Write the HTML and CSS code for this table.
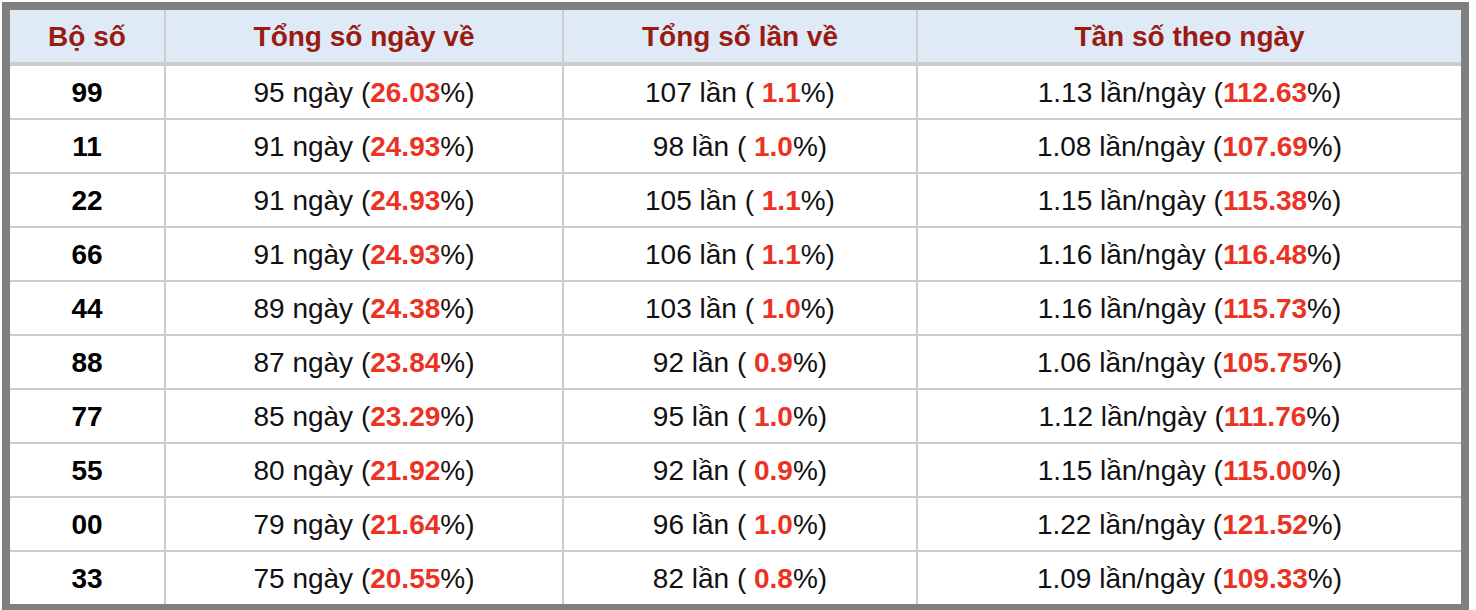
FILE: index.html
```html
<!DOCTYPE html>
<html lang="vi">
<head>
<meta charset="utf-8">
<title>Thống kê</title>
<link rel="stylesheet" href="styles.css">
</head>
<body>
<div class="frame">
<table class="stats">
<colgroup>
<col class="c1"><col class="c2"><col class="c3"><col class="c4">
</colgroup>
<thead>
<tr><th>Bộ số</th><th>Tổng số ngày về</th><th>Tổng số lần về</th><th>Tần số theo ngày</th></tr>
</thead>
<tbody>
<tr><td class="num">99</td><td>95 ngày (<b>26.03</b>%)</td><td>107 lần ( <b>1.1</b>%)</td><td>1.13 lần/ngày (<b>112.63</b>%)</td></tr>
<tr><td class="num">11</td><td>91 ngày (<b>24.93</b>%)</td><td>98 lần ( <b>1.0</b>%)</td><td>1.08 lần/ngày (<b>107.69</b>%)</td></tr>
<tr><td class="num">22</td><td>91 ngày (<b>24.93</b>%)</td><td>105 lần ( <b>1.1</b>%)</td><td>1.15 lần/ngày (<b>115.38</b>%)</td></tr>
<tr><td class="num">66</td><td>91 ngày (<b>24.93</b>%)</td><td>106 lần ( <b>1.1</b>%)</td><td>1.16 lần/ngày (<b>116.48</b>%)</td></tr>
<tr><td class="num">44</td><td>89 ngày (<b>24.38</b>%)</td><td>103 lần ( <b>1.0</b>%)</td><td>1.16 lần/ngày (<b>115.73</b>%)</td></tr>
<tr><td class="num">88</td><td>87 ngày (<b>23.84</b>%)</td><td>92 lần ( <b>0.9</b>%)</td><td>1.06 lần/ngày (<b>105.75</b>%)</td></tr>
<tr><td class="num">77</td><td>85 ngày (<b>23.29</b>%)</td><td>95 lần ( <b>1.0</b>%)</td><td>1.12 lần/ngày (<b>111.76</b>%)</td></tr>
<tr><td class="num">55</td><td>80 ngày (<b>21.92</b>%)</td><td>92 lần ( <b>0.9</b>%)</td><td>1.15 lần/ngày (<b>115.00</b>%)</td></tr>
<tr><td class="num">00</td><td>79 ngày (<b>21.64</b>%)</td><td>96 lần ( <b>1.0</b>%)</td><td>1.22 lần/ngày (<b>121.52</b>%)</td></tr>
<tr><td class="num">33</td><td>75 ngày (<b>20.55</b>%)</td><td>82 lần ( <b>0.8</b>%)</td><td>1.09 lần/ngày (<b>109.33</b>%)</td></tr>
</tbody>
</table>
</div>
</body>
</html>
```

FILE: styles.css
```css
html, body {
  margin: 0;
  padding: 0;
  background: #ffffff;
}
body {
  padding: 2px 0 0 2px;
  font-family: "Liberation Sans", Arial, Helvetica, sans-serif;
}
.frame {
  width: 1451px;
  border: 8px solid #808080;
  background: #ffffff;
}
.stats {
  width: 1451px;
  table-layout: fixed;
  border-collapse: separate;
  border-spacing: 0;
  font-size: 28px;
  color: #111111;
}
.c1 { width: 154px; }
.c2 { width: 398px; }
.c3 { width: 354px; }
.c4 { width: 545px; }
.stats th,
.stats td {
  padding: 2px 0 0;
  text-align: center;
  line-height: 50px;
  white-space: nowrap;
}
.stats th + th,
.stats td + td {
  border-left: 2px solid #cccccc;
}
.stats th {
  padding-top: 1px;
  line-height: 51px;
  background: #deebf7;
  color: #9a1b12;
  font-weight: bold;
  border-bottom: 4px solid #cccccc;
}
.stats tbody tr + tr td {
  border-top: 2px solid #cccccc;
}
.stats td.num {
  font-weight: bold;
  color: #000000;
}
.stats td b {
  color: #ea3323;
  font-weight: bold;
}
```
